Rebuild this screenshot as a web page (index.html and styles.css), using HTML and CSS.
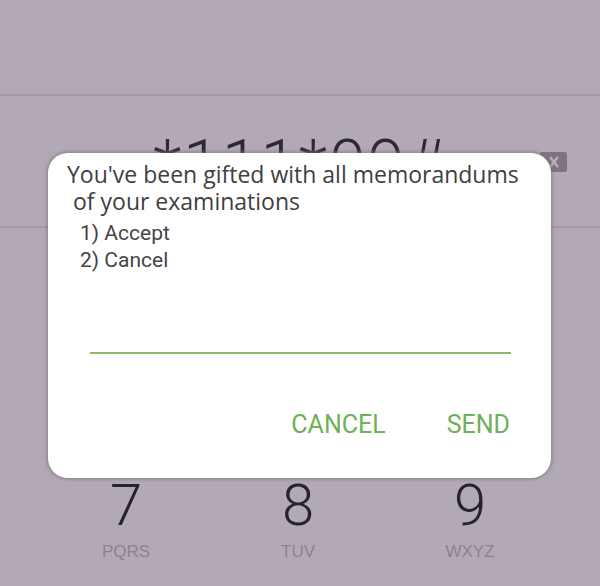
FILE: index.html
```html
<!DOCTYPE html>
<html lang="en">

<head>
    <meta charset="UTF-8">
    <meta name="viewport" content="width=device-width, initial-scale=1.0">
    <title>USSD</title>
    <link rel="stylesheet" href="styles.css">
</head>

<body>
    <div class="phone">
        <div class="top-bar"></div>

        <div class="display">
            <span class="number">*111*09#</span>
            <span class="backspace">
                <svg width="32" height="20" viewBox="0 0 32 20">
                    <path d="M6 0 H30 Q32 0 32 2 V18 Q32 20 30 20 H6 L0 10 Z" fill="#7d7483" />
                    <path d="M15 5 L23 15 M23 5 L15 15" stroke="#b9b0bd" stroke-width="2.4" />
                </svg>
            </span>
        </div>

        <div class="keypad">
            <div class="key">
                <span class="digit">7</span>
                <span class="letters">PQRS</span>
            </div>
            <div class="key">
                <span class="digit">8</span>
                <span class="letters">TUV</span>
            </div>
            <div class="key">
                <span class="digit">9</span>
                <span class="letters">WXYZ</span>
            </div>
        </div>
    </div>

    <div class="dialog">
        <p class="message">You've been gifted with all memorandums<br>&nbsp;of your examinations</p>
        <div class="options">
            <p class="option">1) Accept</p>
            <p class="option">2) Cancel</p>
        </div>

        <div class="reply">
            <input type="text" id="reply-input">
        </div>

        <div class="actions">
            <button type="button">CANCEL</button>
            <button type="button">SEND</button>
        </div>
    </div>
</body>

</html>
```

FILE: styles.css
```css
* {
    padding: 0;
    margin: 0;
    box-sizing: border-box;
}

body {
    width: 600px;
    height: 586px;
    overflow: hidden;
    background: #b3a9b6;
    font-family: Roboto, 'Liberation Sans', sans-serif;
}

.top-bar {
    height: 96px;
    border-bottom: 2px solid #a39aa7;
}

.display {
    height: 132px;
    border-bottom: 2px solid #a39aa7;
    display: flex;
    justify-content: center;
    position: relative;
}

.number {
    margin-top: 36px;
    font-size: 66px;
    font-weight: 300;
    color: #2b2a2d;
    letter-spacing: 2px;
    line-height: 1;
}

.backspace {
    position: absolute;
    right: 33px;
    top: 56px;
}

.keypad {
    display: grid;
    grid-template-columns: repeat(3, 1fr);
    padding: 248px 44px 0 40px;
}

.key {
    display: flex;
    flex-direction: column;
    align-items: center;
}

.digit {
    font-size: 58px;
    font-weight: 300;
    color: #252427;
    line-height: 1;
}

.letters {
    margin-top: 8px;
    font-family: 'Liberation Sans', sans-serif;
    font-size: 17px;
    color: #8a838e;
}

/* the USSD popup sits over the dialer */
.dialog {
    position: absolute;
    left: 48px;
    top: 153px;
    width: 503px;
    height: 325px;
    background: #fff;
    border-radius: 20px;
    box-shadow: 0 0 3px 2px rgba(120, 120, 120, 0.55);
    padding: 8px 0 0 19px;
}

.message {
    font-family: 'Open Sans', 'Noto Sans', sans-serif;
    font-size: 23px;
    line-height: 27px;
    color: #3f3e41;
}

.options {
    margin-top: 5px;
}

.option {
    font-size: 21px;
    line-height: 27px;
    color: #454447;
    padding-left: 13px;
}

.reply {
    padding: 50px 40px 0 23px;
}

input {
    width: 100%;
    border: none;
    border-bottom: 2px solid #8cb96f;
    height: 30px;
    outline: none;
}

.actions {
    display: flex;
    justify-content: flex-end;
    gap: 61px;
    padding: 56px 41px 0 0;
}

button {
    border: none;
    background: none;
    font-family: Roboto, 'Liberation Sans', sans-serif;
    font-size: 25px;
    color: #6fb05a;
}
```
